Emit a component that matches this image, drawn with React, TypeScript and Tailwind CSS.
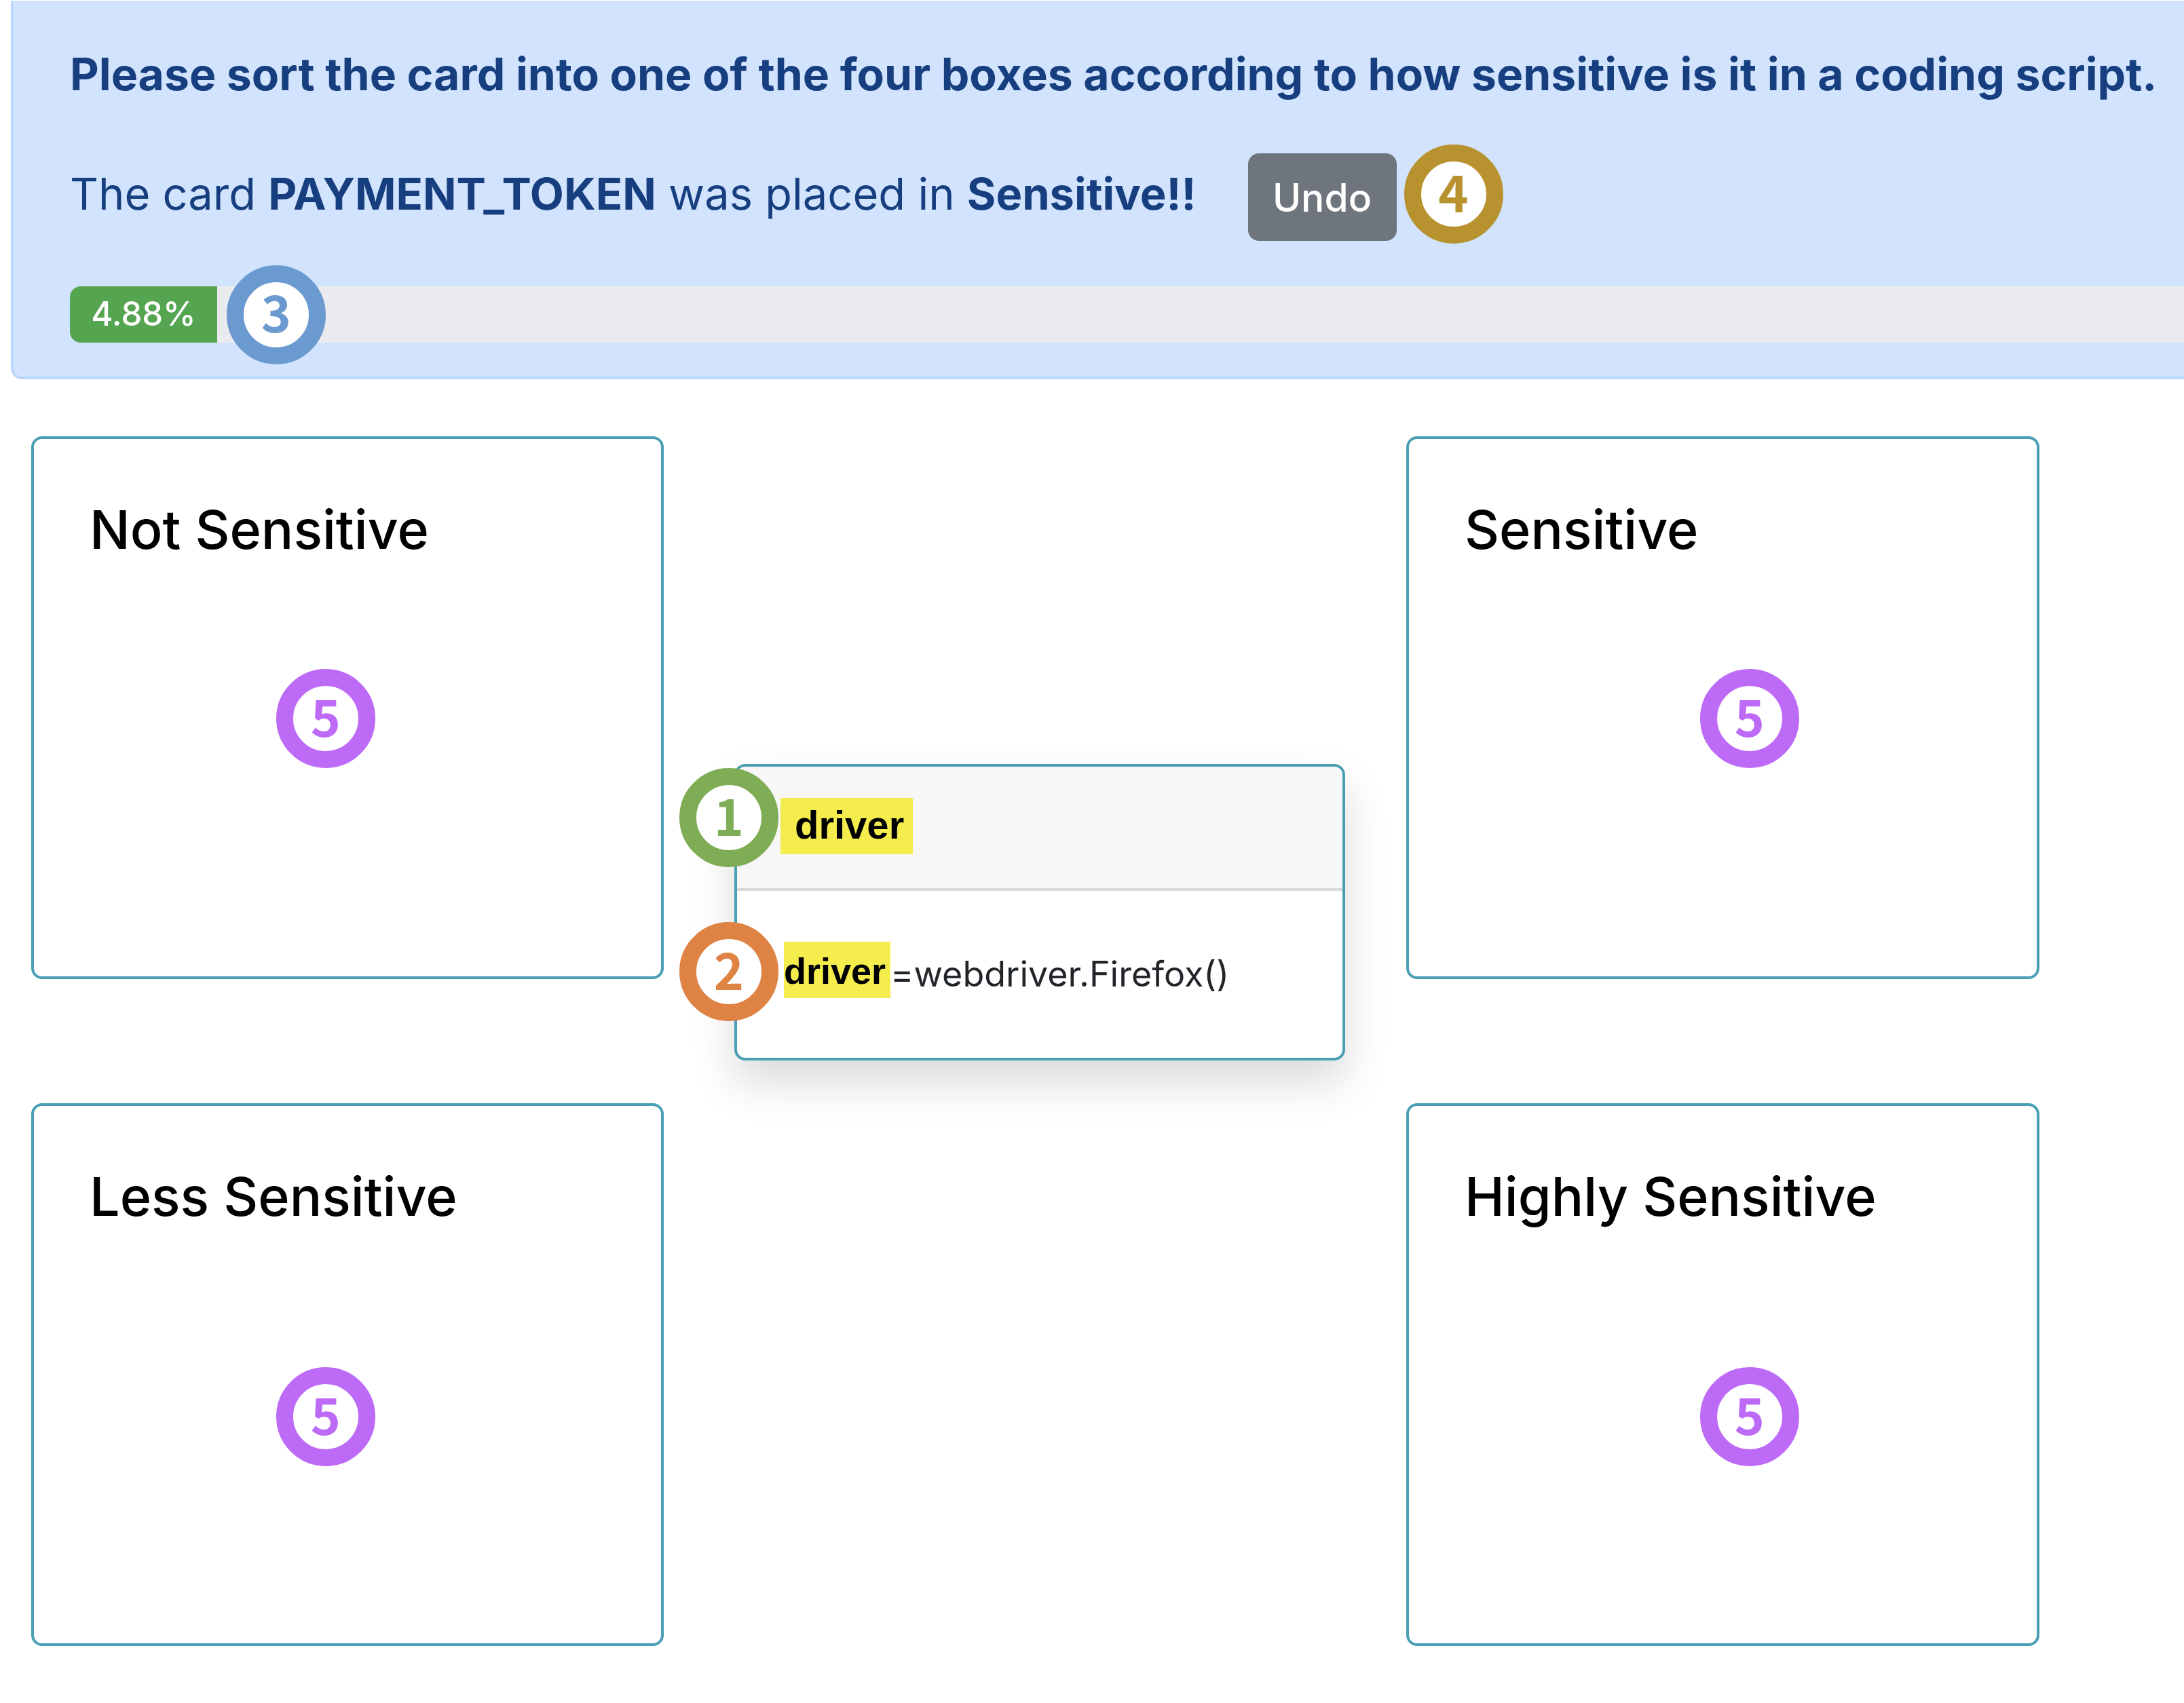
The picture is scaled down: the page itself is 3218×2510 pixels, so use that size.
import type { ReactNode } from "react";

type Box = { title: string; column: string; badge: string };

const boxes: Box[] = [
  { title: "Not Sensitive", column: "col-start-1 row-start-1", badge: "left-[357px] top-[339px]" },
  { title: "Sensitive", column: "col-start-3 row-start-1", badge: "left-[429px] top-[339px]" },
  { title: "Less Sensitive", column: "col-start-1 row-start-2", badge: "left-[357px] top-[385px]" },
  { title: "Highly Sensitive", column: "col-start-3 row-start-2", badge: "left-[429px] top-[385px]" },
];

const progress = 4.88;

function Badge({ className, children }: { className: string; children: ReactNode }) {
  return (
    <span
      className={`flex size-[146px] items-center justify-center rounded-full border-[25px] bg-white pb-3 font-['Noto_Sans_CJK_SC',sans-serif] text-[75px] leading-none font-bold ${className}`}
    >
      {children}
    </span>
  );
}

function SortBox({ title, column, badge }: Box) {
  return (
    <section
      className={`relative min-h-[800px] rounded-2xl border-4 border-[#4b9fb5] bg-white px-[82px] pt-[83px] ${column}`}
    >
      <h2 className="text-[79px] leading-[100px] font-medium text-black">{title}</h2>
      <Badge className={`absolute border-[#bd6bf7] text-[#bd6bf7] ${badge}`}>5</Badge>
    </section>
  );
}

export default function App() {
  return (
    <div className="min-h-screen overflow-x-hidden bg-white font-['Inter',sans-serif]">
      <header className="mt-px ml-4 rounded-bl-2xl border-b-4 border-l-4 border-[#bad6fc] bg-[#d1e3fd] pt-[58px] pb-[50px] pl-[83px] leading-[100px] text-[#173f7f]">
        <h1 className="text-[66px] font-bold whitespace-nowrap">
          Please sort the card into one of the four boxes according to how sensitive is it in a coding script.
        </h1>
        <div className="mt-[54px] flex h-[146px] items-center whitespace-nowrap">
          <p className="text-[65px]">
            The card <strong className="font-bold">PAYMENT_TOKEN</strong> was placed in{" "}
            <strong className="font-bold">Sensitive!!</strong>
          </p>
          <button
            type="button"
            className="mt-2 ml-[76px] h-[129px] w-[219px] rounded-2xl bg-[#6e757c] pt-1 text-[57px] font-medium text-white"
          >
            Undo
          </button>
          <Badge className="ml-[11px] border-[#b8922f] text-[#b8922f]">4</Badge>
        </div>
        <div className="relative mt-[63px]">
          <div
            role="progressbar"
            aria-label="Cards sorted"
            aria-valuenow={progress}
            aria-valuemin={0}
            aria-valuemax={100}
            className="flex h-[83px] overflow-hidden rounded-l-2xl bg-[#eaebee]"
          >
            <div className="flex w-[217px] items-center justify-center bg-[#55a550] pb-0.5 text-[49px] font-medium text-white">
              {progress}%
            </div>
          </div>
          <Badge className="absolute top-1/2 left-[231px] -translate-y-1/2 border-[#6b9ad0] text-[#6b9ad0]">3</Badge>
        </div>
      </header>

      <main className="mt-[84px] grid grid-cols-[932fr_1094fr_933fr] gap-y-[183px] pr-[213px] pb-[84px] pl-[46px]">
        {boxes.map((box) => (
          <SortBox key={box.title} {...box} />
        ))}

        <article className="relative col-start-2 row-span-2 row-start-1 mt-[483px] mr-[90px] ml-[104px] self-start rounded-2xl border-4 border-[#4b9fb5] bg-white shadow-[0_32px_64px_rgba(0,0,0,0.15)]">
          <div className="rounded-t-xl border-b-4 border-[#d9d9d9] bg-[#f7f7f7] pt-[46px] pb-[50px] pl-16">
            <mark className="block w-fit bg-[#f4ed4d] pr-[13px] pb-1 pl-[21px] font-['Liberation_Sans',sans-serif] text-[58px] leading-[79px] font-bold text-black">
              driver
            </mark>
          </div>
          <p className="flex pt-[75px] pb-[88px] pl-[69px] text-[52px] text-[#212529]">
            <mark className="bg-[#f4ed4d] pt-1 pr-[7px] font-['Liberation_Sans',sans-serif] text-[54px] leading-[79px] font-bold text-black">
              driver
            </mark>
            <span className="pt-3 leading-[71px]">=webdriver.Firefox()</span>
          </p>
          <Badge className="absolute top-0.5 -left-[85px] border-[#7ead55] text-[#7ead55]">1</Badge>
          <Badge className="absolute top-[229px] -left-[85px] border-[#df8344] text-[#df8344]">2</Badge>
        </article>
      </main>
    </div>
  );
}
